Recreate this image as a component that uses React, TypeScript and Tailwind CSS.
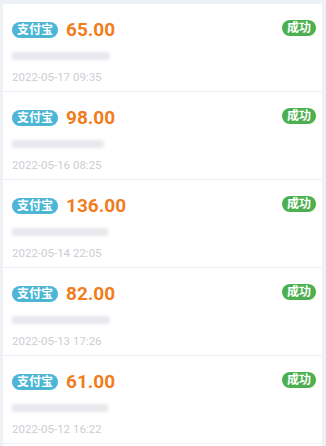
import React from "react";

const records = [
  { amount: "65.00", time: "2022-05-17 09:35", blur: 98 },
  { amount: "98.00", time: "2022-05-16 08:25", blur: 92 },
  { amount: "136.00", time: "2022-05-14 22:05", blur: 96 },
  { amount: "82.00", time: "2022-05-13 17:26", blur: 98 },
  { amount: "61.00", time: "2022-05-12 16:22", blur: 96 },
];

function Row({ amount, time, blur }: { amount: string; time: string; blur: number }) {
  return (
    <div className="h-[88px] border-b border-[#eef1f5] pl-[9px] pr-[6px] pt-[14px] flex items-start">
      <div className="flex-1">
        <div className="flex items-center h-[24px]">
          <span className="h-[16px] px-[5px] rounded-full bg-[#4db6d6] text-white text-[12px] font-bold leading-[16px]">
            支付宝
          </span>
          <span className="ml-[8px] text-[19px] font-bold text-[#f07d1e] leading-[24px]">{amount}</span>
        </div>
        <div
          className="mt-[10px] h-[8px] rounded-sm bg-[#e6e8ec] blur-[1.5px]"
          style={{ width: blur }}
        />
        <div className="mt-[9px] text-[11.5px] text-[#cbced3] leading-[16px]">{time}</div>
      </div>
      <div className="mt-[2px] h-[16px] px-[5px] rounded-full bg-[#4caf50] text-white text-[12px] font-bold leading-[16px]">
        成功
      </div>
    </div>
  );
}

export default function App() {
  return (
    <div
      className="w-[326px] h-[446px] overflow-hidden bg-[#eef2f7] pt-[4px] pl-[3px] pr-[4px]"
      style={{ fontFamily: "Roboto, 'Noto Sans CJK SC', sans-serif" }}
    >
      <div className="bg-white h-full">
        {records.map((r) => (
          <Row key={r.time} {...r} />
        ))}
      </div>
    </div>
  );
}
